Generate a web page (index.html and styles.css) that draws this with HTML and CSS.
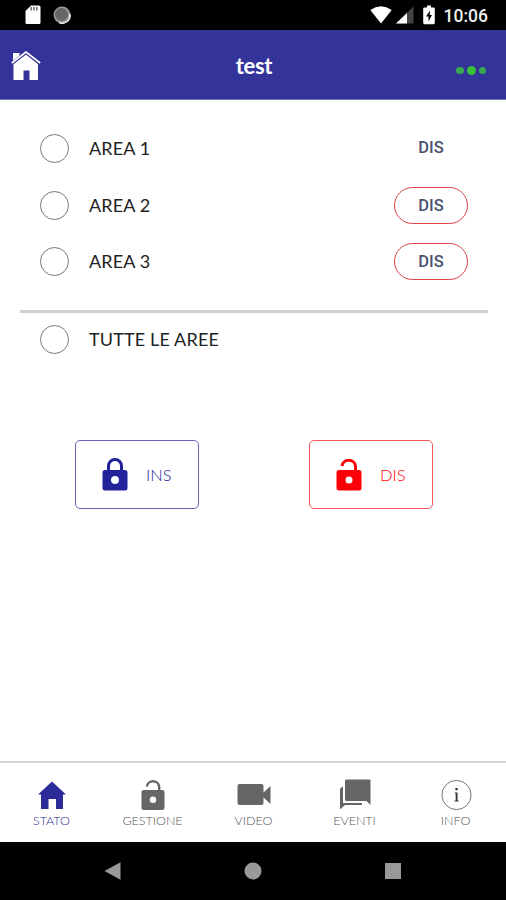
FILE: index.html
```html
<!DOCTYPE html>
<html lang="it">
<head>
<meta charset="utf-8">
<title>test</title>
<link rel="stylesheet" href="styles.css">
</head>
<body>
<div class="status">
  <svg class="sd" width="16" height="20" viewBox="0 0 16 20"><path fill="#fff" d="M6 .5h8q1.500 0 1.500 1.500v15.500q0 1.500-1.500 1.500H2Q.5 19 .5 17.500V6z"/><path stroke="#777" stroke-width="1.600" d="M6.200 2v3.500M9 2v3.500M11.800 2v3.500"/></svg>
  <svg class="sync" width="18" height="18" viewBox="0 0 18 18"><circle cx="9" cy="9" r="8.500" fill="#999"/><path d="M17 8a8 8 0 0 1-11 8.600" fill="none" stroke="#eee" stroke-width="1.500"/><circle cx="8.500" cy="8.500" r="6.500" fill="#666"/></svg>
  <div class="system">
    <svg width="22" height="18" viewBox="0 0 22 18"><path fill="#fff" d="M.3 4Q11-3.300 21.700 4L11 17.500z"/></svg>
    <svg width="18" height="18" viewBox="0 0 18 18"><path fill="#444" d="M17.500.5v17H0z"/><path fill="#fff" d="M11 7v10.500H0z"/></svg>
    <svg class="battery" width="12" height="20" viewBox="0 0 12 20"><path fill="#fff" d="M4 .5h4v2h2.500q1.300 0 1.300 1.300v14q0 1.400-1.300 1.400h-9Q.2 19.200.2 17.800v-14q0-1.300 1.300-1.300H4z"/><path d="M7 5.500 3 11.500h2.500v5L9 10H6.800z"/></svg>
    <span class="clock">10:06</span>
  </div>
</div>
<header class="header">
  <svg class="home" width="30" height="30" viewBox="0 0 30 30"><path fill="#fff" d="M2 2h6.500v5L2 12zM15 3.500 27 13v16h-8.500V19.500h-6V29H2.500V13z"/><path fill="none" stroke="#333399" stroke-width="3.200" d="M1 12.300 15 1.300l14 11"/><path fill="none" stroke="#fff" stroke-width="1.700" d="M.8 12 15 1l14.200 11"/><path fill="#fff" d="M2 2h6v3L2 9.500z"/></svg>
  <h1>test</h1>
  <div class="dots"><i></i><i class="big"></i><i></i></div>
</header>
<main>
  <section class="areas">
    <div class="row"><span class="radio"></span><span class="name">AREA 1</span><span class="badge plain">DIS</span></div>
    <div class="row"><span class="radio"></span><span class="name">AREA 2</span><span class="badge">DIS</span></div>
    <div class="row"><span class="radio"></span><span class="name">AREA 3</span><span class="badge">DIS</span></div>
  </section>
  <div class="row all"><span class="radio"></span><span class="name">TUTTE LE AREE</span></div>
  <div class="actions">
    <button class="ins"><svg width="26" height="33" viewBox="0 0 26 33"><path fill="none" stroke="currentColor" stroke-width="3" d="M6.500 13V8a6.500 6.500 0 0 1 13 0v5"/><path fill="currentColor" fill-rule="evenodd" d="M3 12h20q2.500 0 2.500 2.500v15.500q0 2.500-2.500 2.500H3Q.5 32.500.5 30V14.500Q.5 12 3 12zm10 6a4 4 0 1 0 0 8 4 4 0 0 0 0-8z"/></svg><span>INS</span></button>
    <button class="dis"><svg width="26" height="33" viewBox="0 0 26 33"><path fill="none" stroke="currentColor" stroke-width="3" d="M6 8a6.800 6.500 0 0 1 13.500 0v5"/><path fill="currentColor" fill-rule="evenodd" d="M3 12h20q2.500 0 2.500 2.500v15.500q0 2.500-2.500 2.500H3Q.5 32.500.5 30V14.500Q.5 12 3 12zm10 6.500a3.500 3.500 0 1 0 0 7 3.500 3.500 0 0 0 0-7z"/></svg><span>DIS</span></button>
  </div>
</main>
<nav class="tabs">
  <a class="tab active"><svg width="30" height="32" viewBox="0 0 30 32"><path fill="currentColor" d="M15 2.500 29 15.500h-3V30h-7V20h-7.500v10H4V15.500H1z"/></svg><span>STATO</span></a>
  <a class="tab"><svg width="30" height="32" viewBox="0 0 30 32"><path fill="none" stroke="currentColor" stroke-width="2.400" d="M8.800 7.500a6.300 6.300 0 0 1 12.400 0V12"/><path fill="currentColor" fill-rule="evenodd" d="M5.500 11h19q2 0 2 2v16q0 2-2 2h-19q-2 0-2-2V13q0-2 2-2zm9.500 6.500a3.200 3.200 0 1 0 0 6.400 3.200 3.200 0 0 0 0-6.400z"/></svg><span>GESTIONE</span></a>
  <a class="tab"><svg width="34" height="32" viewBox="0 0 34 32"><path fill="currentColor" d="M2.500 5h22q2 0 2 2v6.500L33.500 7v18l-7-6.500V24q0 2-2 2h-22q-2 0-2-2V7q0-2 2-2z"/></svg><span>VIDEO</span></a>
  <a class="tab"><svg width="32" height="32" viewBox="0 0 32 32"><path fill="currentColor" d="M7.500.5h23q1 0 1 1V26l-4-4h-20q-1.500 0-1.500-1.500V2Q6 .5 7.500.5zM1 9.500l3-2V24h19v2H6l-4.500 4H1z"/></svg><span>EVENTI</span></a>
  <a class="tab"><svg width="32" height="32" viewBox="0 0 32 32"><circle cx="16.500" cy="16" r="14.600" fill="none" stroke="#777" stroke-width="1"/><path fill="#333" d="M15.400 9h2.300v2.300h-2.300zM14.800 13.500h2.700v8h1v1h-4v-1h1.200v-7h-.9z"/></svg><span>INFO</span></a>
</nav>
<footer class="android">
  <svg width="18" height="18" viewBox="0 0 18 18"><path d="M.5 9 16.500.3v17.400z"/></svg>
  <svg width="18" height="18" viewBox="0 0 18 18"><circle cx="9" cy="9" r="8.500"/></svg>
  <svg width="18" height="18" viewBox="0 0 18 18"><path d="M1 1h16v16H1z"/></svg>
</footer>
</body>
</html>
```
FILE: styles.css
```css
* { box-sizing: border-box; }
body { margin: 0; width: 506px; height: 900px; display: flex; flex-direction: column; background: #fff; font-family: Lato, sans-serif; color: #222; overflow: hidden; }
svg { display: block; flex: none; }
.status { height: 30px; background: #000; display: flex; align-items: center; padding: 0 18px 0 25px; }
.sync { margin-left: 12px; }
.system { margin-left: auto; display: flex; align-items: center; gap: 3px; }
.system svg:first-child { margin-right: 1px; }
.battery { margin-left: 6px; }
.clock { color: #eee; font: 500 17.500px/30px Roboto, sans-serif; margin-left: 6px; padding-top: 2px; }
.header { height: 70px; background: #333399; border-bottom: 1px solid #77b; display: grid; grid-template-columns: 100px 1fr 100px; align-items: center; }
.home { margin: 3px 0 0 11px; }
h1 { margin: 0 0 0 2px; padding-top: 3px; color: #fff; text-align: center; font: 700 22px/26px Lato, sans-serif; letter-spacing: -.3px; }
.dots { display: flex; align-items: center; justify-content: flex-end; gap: 3px; padding: 12px 20px 0 0; }
.dots i { width: 7.500px; height: 7.500px; border-radius: 50%; background: #39a84f; }
.dots .big { width: 9px; height: 9px; background: #35c238; }
main { flex: 1; }
.areas { margin: 0 18px 0 20px; padding: 20px; height: 213px; border-bottom: 3px solid #d0d0d0; }
.row { display: flex; align-items: center; height: 56.800px; }
.radio { width: 29px; height: 29px; border: 1px solid #777; border-radius: 50%; flex: none; }
.name { margin-left: 20px; padding-bottom: 1px; font-size: 18px; line-height: 24px; letter-spacing: .15px; }
.badge { margin-left: auto; width: 74px; height: 37px; border: 1.500px solid #dc4347; border-radius: 19px; text-align: center; font: 500 16.500px/35px Roboto, sans-serif; color: #4b5272; }
.plain { border-color: transparent; padding-bottom: 2px; line-height: 33px; }
.all { margin: -2px 40px 0; }
.all .name { padding: 0; }
.actions { display: flex; justify-content: space-between; margin: 72px 73px 0 75px; }
button { display: flex; align-items: center; gap: 18px; width: 124px; height: 69px; padding: 0 0 0 26px; border: 1px solid #6464b4; border-radius: 5px; background: #fff; font: 300 16.500px/22px Lato, sans-serif; }
button span { padding-top: 1px; }
.ins { color: #22229a; }
.dis { color: #ff0008; border-color: #f7575b; }
.tabs { height: 81px; border-top: 2px solid #d4d4d4; display: grid; grid-template-columns: repeat(5, 1fr); padding: 16px 0 0 1px; }
.tab { display: flex; flex-direction: column; align-items: center; color: #666; font-weight: 300; font-size: 12.500px; line-height: 18px; gap: 1px; }
.tab span { color: #555; }
.active, .tab.active span { color: #2b2b99; }
.android { height: 58px; background: #000; display: flex; justify-content: center; gap: 122px; align-items: center; fill: #999; }
```
